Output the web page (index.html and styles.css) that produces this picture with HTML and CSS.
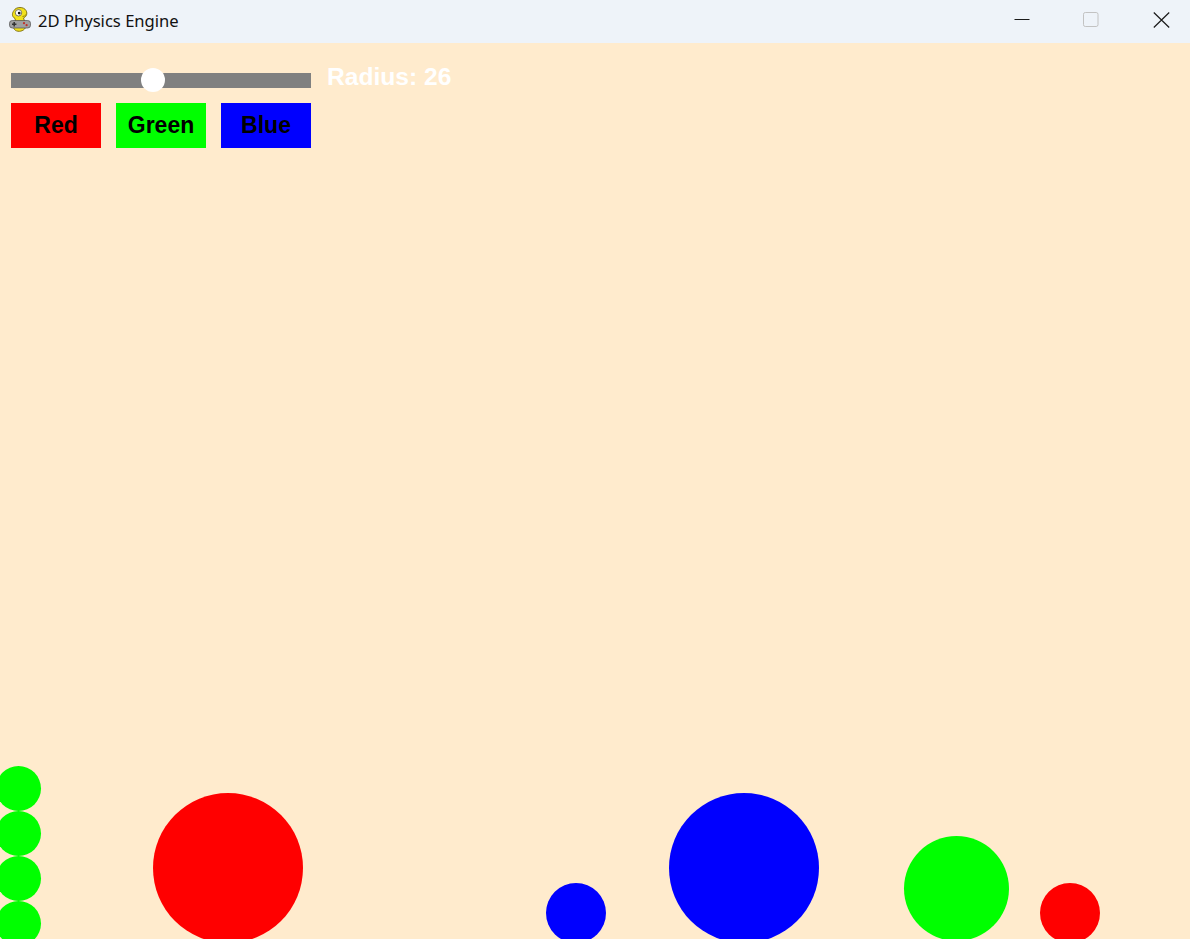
FILE: index.html
```html
<!DOCTYPE html>
<html>
<head>
<meta charset="utf-8">
<title>2D Physics Engine</title>
<link rel="stylesheet" href="styles.css">
</head>
<body>
<div class="window">
  <header class="titlebar">
    <div class="title-left">
      <svg class="app-icon" width="24" height="28" viewBox="0 0 24 26">
        <path d="M6 3.5 C8 -0.5 16 -0.5 18 3.5 C20 7 18 10 15.5 11 L16.5 14 C19 15 19 20 16.5 22 C14 25 8.5 25 6.5 22.5 C4.5 20 5.5 17 8 16 L7 11.5 C3.5 9.5 4 6 6 3.5 Z" fill="#f2e21c" stroke="#7a6a08" stroke-width="0.9"/>
        <circle cx="10.5" cy="5.8" r="3.2" fill="#fff" stroke="#444" stroke-width="0.7"/>
        <circle cx="11.2" cy="6.1" r="1.4" fill="#111"/>
        <path d="M14.5 9.5 Q16.8 9.4 18 7.6" stroke="#7a6a08" stroke-width="0.8" fill="none"/>
        <rect x="1.5" y="13.5" width="21" height="7.5" rx="2.8" fill="#a0a0a0" stroke="#505050" stroke-width="0.7"/>
        <rect x="4" y="16.5" width="4.4" height="1.5" fill="#333"/>
        <rect x="5.45" y="15" width="1.5" height="4.5" fill="#333"/>
        <circle cx="16" cy="16.2" r="1.1" fill="#c0302a"/>
        <circle cx="18.6" cy="18.2" r="1.1" fill="#c0302a"/>
      </svg>
      <span class="title-text">2D Physics Engine</span>
    </div>
    <div class="win-controls">
      <div class="win-btn btn-min">
        <svg width="16" height="16" viewBox="0 0 16 16"><line x1="0.5" y1="7.5" x2="15.5" y2="7.5" stroke="#1a1a1a" stroke-width="1"/></svg>
      </div>
      <div class="win-btn btn-max">
        <svg width="16" height="16" viewBox="0 0 16 16"><rect x="0.5" y="0.5" width="14.5" height="14" rx="1.8" fill="none" stroke="#c2c2c2" stroke-width="1"/></svg>
      </div>
      <div class="win-btn btn-close">
        <svg width="17" height="16" viewBox="0 0 17 16"><path d="M0.8 0.5 L16.2 15.5 M16.2 0.5 L0.8 15.5" stroke="#1a1a1a" stroke-width="1.2"/></svg>
      </div>
    </div>
  </header>
  <main class="canvas">
    <div class="controls">
      <div class="slider-row">
        <div class="slider-track">
          <div class="slider-knob"></div>
        </div>
        <span class="radius-label">Radius: 26</span>
      </div>
      <div class="color-buttons">
        <div class="color-btn btn-red">Red</div>
        <div class="color-btn btn-green">Green</div>
        <div class="color-btn btn-blue">Blue</div>
      </div>
    </div>
    <div class="ball ball-green" style="left:-4.5px; top:722.7px; width:45px; height:45px;"></div>
    <div class="ball ball-green" style="left:-4.5px; top:767.7px; width:45px; height:45px;"></div>
    <div class="ball ball-green" style="left:-4.5px; top:812.7px; width:45px; height:45px;"></div>
    <div class="ball ball-green" style="left:-4.5px; top:857.7px; width:45px; height:45px;"></div>
    <div class="ball ball-red" style="left:153px; top:750px; width:150px; height:150px;"></div>
    <div class="ball ball-blue" style="left:546px; top:840px; width:60px; height:60px;"></div>
    <div class="ball ball-blue" style="left:669px; top:750px; width:150px; height:150px;"></div>
    <div class="ball ball-green" style="left:903.5px; top:793px; width:105px; height:105px;"></div>
    <div class="ball ball-red" style="left:1040px; top:840px; width:60px; height:60px;"></div>
  </main>
</div>
</body>
</html>
```

FILE: styles.css
```css
html, body {
  margin: 0;
  padding: 0;
  width: 1190px;
  height: 939px;
  overflow: hidden;
}

.window {
  display: flex;
  flex-direction: column;
  width: 1190px;
  height: 939px;
}

.titlebar {
  height: 43px;
  flex: 0 0 43px;
  background: #eef3f9;
  display: flex;
  align-items: center;
  justify-content: space-between;
}

.title-left {
  display: flex;
  align-items: center;
  padding-left: 8px;
}

.app-icon {
  display: block;
  margin-top: -4px;
}

.title-text {
  font-family: "Noto Sans", "Open Sans", sans-serif;
  font-size: 16.6px;
  color: #111;
  margin-left: 6px;
  margin-top: -3px;
}

.win-controls {
  display: flex;
  height: 100%;
}

.win-btn {
  display: flex;
  align-items: center;
  justify-content: center;
  margin-top: -4px;
}

.btn-min { width: 55px; }
.btn-max { width: 83px; }
.btn-close { width: 58px; }

.canvas {
  position: relative;
  flex: 1 1 auto;
  background: #ffebcd;
  overflow: hidden;
}

.controls {
  padding: 30px 0 0 11px;
  display: flex;
  flex-direction: column;
}

.slider-row {
  display: flex;
  align-items: flex-start;
  height: 15px;
}

.slider-track {
  position: relative;
  width: 300px;
  height: 15px;
  background: #808080;
}

.slider-knob {
  position: absolute;
  left: 130px;
  top: -5px;
  width: 24px;
  height: 24px;
  border-radius: 50%;
  background: #ffffff;
}

.radius-label {
  font-family: "Liberation Sans", Arial, sans-serif;
  font-weight: bold;
  font-size: 24.6px;
  line-height: 25px;
  color: #ffffff;
  margin-left: 16px;
  margin-top: -9px;
}

.color-buttons {
  display: flex;
  gap: 15px;
  margin-top: 15px;
}

.color-btn {
  width: 90px;
  height: 45px;
  display: flex;
  align-items: center;
  justify-content: center;
  font-family: "Liberation Sans", Arial, sans-serif;
  font-weight: bold;
  font-size: 23px;
  line-height: 23px;
  color: #000;
}

.btn-red { background: #ff0000; }
.btn-green { background: #00ff00; }
.btn-blue { background: #0000ff; }

.ball {
  position: absolute;
  border-radius: 50%;
}

.ball-red { background: #ff0000; }
.ball-green { background: #00ff00; }
.ball-blue { background: #0000ff; }
```
